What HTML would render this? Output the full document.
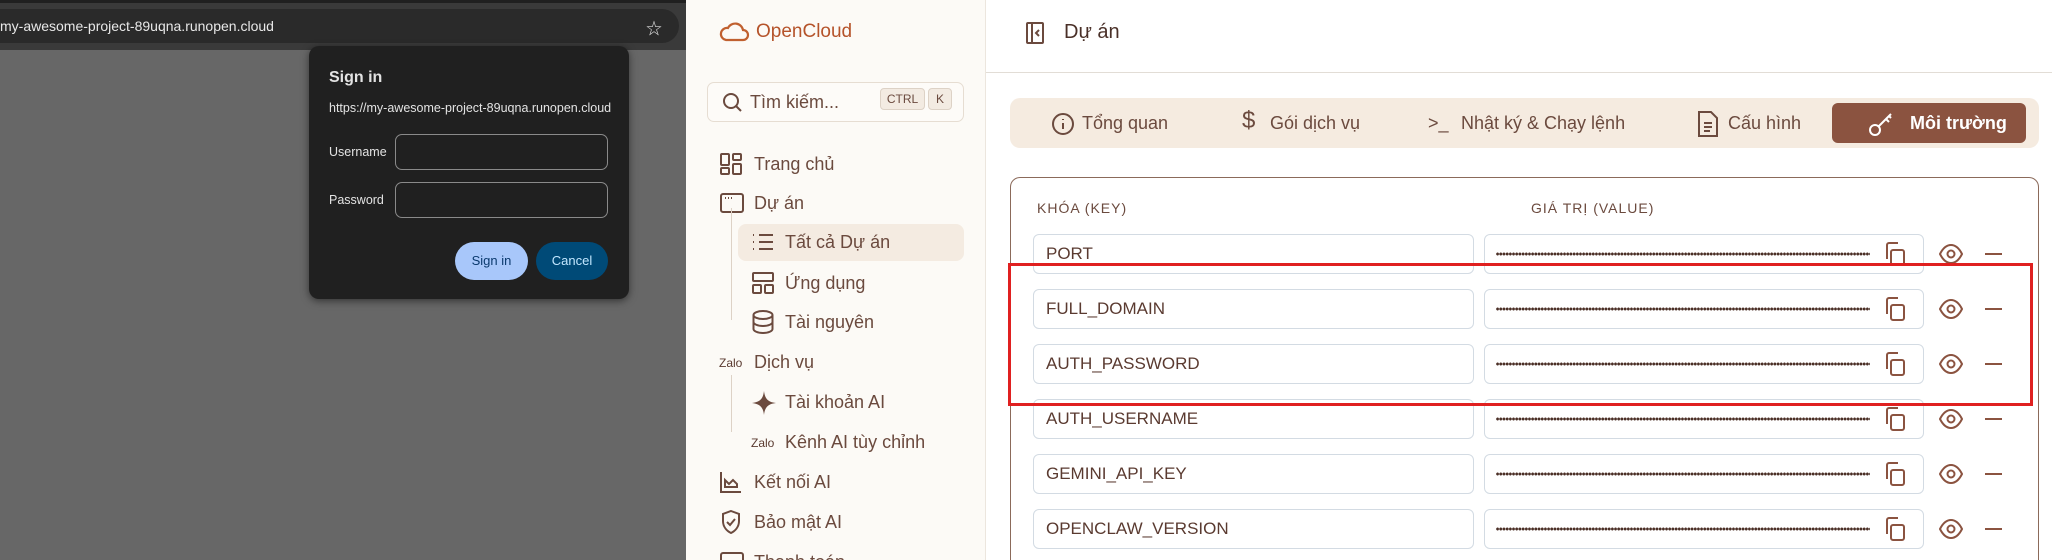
<!DOCTYPE html>
<html style="width:2052px;height:560px;overflow:hidden"><head><meta charset="utf-8"><style>
*{box-sizing:border-box;margin:0;padding:0}
body{width:2052px;height:560px;overflow:hidden;position:relative;font-family:"Liberation Sans","Noto Sans CJK SC",sans-serif;background:#fff}
.abs{position:absolute}
#browser{left:0;top:0;width:686px;height:560px;background:#676767}
#tb{left:0;top:0;width:686px;height:50px;background:#3a3a3a}
#tb0{left:0;top:0;width:686px;height:3px;background:#202020}
#addr{left:-20px;top:9px;width:699px;height:34px;background:#2a2a2a;border-radius:17px;color:#e8e8e8;font-size:14px;line-height:34px;padding-left:20px}
#dlg{left:309px;top:46px;width:320px;height:253px;background:#202020;border-radius:10px;box-shadow:0 2px 8px rgba(0,0,0,.5);color:#e3e3e3}
.inp{position:absolute;left:86px;width:213px;height:36px;border:1px solid #8a8a8a;border-radius:7px}
.btn{position:absolute;top:196px;height:38px;border-radius:19px;font-size:13px;line-height:38px;text-align:center}
#side{left:686px;top:0;width:300px;height:560px;background:#fcfaf6;border-right:1px solid #ece6de;overflow:hidden}
.nav{position:absolute;font-size:18px;color:#6b4a3e;line-height:24px}
#main{left:986px;top:0;width:1066px;height:560px;background:#fff}
.tab{position:absolute;top:111px;font-size:18px;color:#6b4a3e;line-height:24px}
.k{position:absolute;left:1033px;width:441px;height:40px;border:1px solid #d3dbe3;border-radius:6px;font-size:17px;color:#5a3a30;line-height:38px;padding-left:12px}
.v{position:absolute;left:1484px;width:440px;height:40px;border:1px solid #d3dbe3;border-radius:6px}
.dots{position:absolute;left:11px;top:17px;width:374px;height:4px;background-image:radial-gradient(circle,#4a2e25 1.3px,transparent 1.6px);background-size:3.2px 4px}
</style></head><body>
<div id="browser" class="abs"></div>
<div id="tb" class="abs"></div>
<div id="tb0" class="abs"></div>
<div id="addr" class="abs">my-awesome-project-89uqna.runopen.cloud</div>
<div class="abs" style="left:646px;top:15px;color:#ddd;font-size:16px">☆</div>
<div id="dlg" class="abs">
 <div class="abs" style="left:20px;top:23px;font-size:16px;font-weight:bold">Sign in</div>
 <div class="abs" style="left:20px;top:55px;font-size:12.5px">https://my-awesome-project-89uqna.runopen.cloud</div>
 <div class="abs" style="left:20px;top:99px;font-size:12.5px">Username</div>
 <div class="inp" style="top:88px"></div>
 <div class="abs" style="left:20px;top:147px;font-size:12.5px">Password</div>
 <div class="inp" style="top:136px"></div>
 <div class="btn" style="left:146px;width:73px;background:#a8c7fa;color:#0b3a6e">Sign in</div>
 <div class="btn" style="left:227px;width:72px;background:#004a77;color:#c2e7ff">Cancel</div>
</div>

<div id="side" class="abs">
 <svg class="abs" style="left:32px;top:20px" width="32" height="24" viewBox="0 0 32 24" fill="none" stroke="#c0602f" stroke-width="2.2"><path d="M8 20h17a5 5 0 0 0 0-10 8 8 0 0 0-15-2 6 6 0 0 0-2 12z"/></svg>
 <div class="abs" style="left:70px;top:21px;font-size:19px;color:#b5532a">OpenCloud</div>
 <div class="abs" style="left:21px;top:82px;width:257px;height:40px;border:1px solid #e6ddd2;border-radius:7px;background:#fdfbf8"></div>
 <svg class="abs" style="left:35px;top:91px" width="22" height="22" viewBox="0 0 22 22" fill="none" stroke="#6b4a3e" stroke-width="2"><circle cx="10" cy="10" r="7"/><path d="M15 15l5 5"/></svg>
 <div class="nav" style="left:64px;top:90px">Tìm kiếm...</div>
 <div class="abs" style="left:194px;top:88px;width:45px;height:22px;border:1px solid #ddd2c6;background:#f3ebe2;border-radius:4px;font-size:12px;color:#6b4a3e;text-align:center;line-height:20px">CTRL</div>
 <div class="abs" style="left:242px;top:88px;width:24px;height:22px;border:1px solid #ddd2c6;background:#f3ebe2;border-radius:4px;font-size:12px;color:#6b4a3e;text-align:center;line-height:20px">K</div>
 <svg class="abs" style="left:34px;top:153px" width="22" height="22" viewBox="0 0 22 22" fill="none" stroke="#6b4a3e" stroke-width="2"><rect x="1" y="1" width="8" height="11" rx="1"/><rect x="13" y="1" width="8" height="6" rx="1"/><rect x="13" y="11" width="8" height="10" rx="1"/><rect x="1" y="15" width="8" height="6" rx="1"/></svg>
 <div class="nav" style="left:68px;top:152px">Trang chủ</div>
 <svg class="abs" style="left:34px;top:193px" width="24" height="20" viewBox="0 0 24 20" fill="none" stroke="#6b4a3e" stroke-width="2"><rect x="1" y="1" width="22" height="18" rx="2"/><path d="M5 5h1M8 5h1M11 5h1"/></svg>
 <div class="nav" style="left:68px;top:191px">Dự án</div>
 <div class="abs" style="left:45px;top:208px;width:1px;height:112px;background:#ddd2c6"></div>
 <div class="abs" style="left:52px;top:224px;width:226px;height:37px;background:#f4ebe1;border-radius:8px"></div>
 <svg class="abs" style="left:66px;top:232px" width="22" height="20" viewBox="0 0 22 20" fill="none" stroke="#6b4a3e" stroke-width="2"><path d="M1 3h1M1 10h1M1 17h1M7 3h14M7 10h14M7 17h14"/></svg>
 <div class="nav" style="left:99px;top:230px">Tất cả Dự án</div>
 <svg class="abs" style="left:66px;top:272px" width="22" height="22" viewBox="0 0 22 22" fill="none" stroke="#6b4a3e" stroke-width="2"><rect x="1" y="1" width="20" height="8" rx="1"/><rect x="1" y="13" width="8" height="8" rx="1"/><rect x="13" y="13" width="8" height="8" rx="1"/></svg>
 <div class="nav" style="left:99px;top:271px">Ứng dụng</div>
 <svg class="abs" style="left:66px;top:310px" width="22" height="24" viewBox="0 0 22 24" fill="none" stroke="#6b4a3e" stroke-width="2"><ellipse cx="11" cy="5" rx="9.5" ry="4"/><path d="M1.5 5v14c0 2 4 4 9.5 4s9.5-2 9.5-4V5M1.5 12c0 2 4 4 9.5 4s9.5-2 9.5-4"/></svg>
 <div class="nav" style="left:99px;top:310px">Tài nguyên</div>
 <div class="abs" style="left:33px;top:356px;font-size:12px;color:#5a3a30">Zalo</div>
 <div class="nav" style="left:68px;top:350px">Dịch vụ</div>
 <div class="abs" style="left:45px;top:375px;width:1px;height:57px;background:#ddd2c6"></div>
 <svg class="abs" style="left:66px;top:391px" width="24" height="24" viewBox="0 0 24 24"><path d="M12 0C13 8 16 11 24 12 16 13 13 16 12 24 11 16 8 13 0 12 8 11 11 8 12 0z" fill="#6b4a3e"/></svg>
 <div class="nav" style="left:99px;top:390px">Tài khoản AI</div>
 <div class="abs" style="left:65px;top:436px;font-size:12px;color:#5a3a30">Zalo</div>
 <div class="nav" style="left:99px;top:430px">Kênh AI tùy chỉnh</div>
 <svg class="abs" style="left:34px;top:471px" width="22" height="22" viewBox="0 0 22 22" fill="none" stroke="#6b4a3e" stroke-width="2"><path d="M1 1v20h20M5 16v-7l4 4 4-4 4 4v3z"/></svg>
 <div class="nav" style="left:68px;top:470px">Kết nối AI</div>
 <svg class="abs" style="left:35px;top:510px" width="20" height="24" viewBox="0 0 20 24" fill="none" stroke="#6b4a3e" stroke-width="2"><path d="M10 1l8 3v7c0 6-4 10-8 12-4-2-8-6-8-12V4z"/><path d="M6 12l3 3 5-6"/></svg>
 <div class="nav" style="left:68px;top:510px">Bảo mật AI</div>
 <svg class="abs" style="left:34px;top:552px" width="24" height="8" viewBox="0 0 24 8" fill="none" stroke="#6b4a3e" stroke-width="2"><path d="M1 8V3a2 2 0 0 1 2-2h18a2 2 0 0 1 2 2v5"/></svg>
 <div class="abs" style="left:68px;top:550px;width:120px;height:10px;overflow:hidden"><div class="nav" style="left:0;top:0">Thanh toán</div></div>
</div>

<div id="main" class="abs" style="overflow:hidden">
<div class="abs" style="left:24px;top:177px;width:1029px;height:420px;border:1px solid #8b6a5a;border-radius:10px"></div>
</div>
<div class="abs" style="left:986px;top:72px;width:1066px;height:1px;background:#e2ddd6"></div>
<svg class="abs" style="left:1026px;top:22px" width="18" height="22" viewBox="0 0 18 22" fill="none" stroke="#6b4a3e" stroke-width="2"><rect x="1" y="1" width="16" height="20" rx="1"/><path d="M6 1v20M13 8l-3 3 3 3"/></svg>
<div class="abs" style="left:1064px;top:21px;font-size:20px;color:#4a3028">Dự án</div>

<div class="abs" style="left:1010px;top:98px;width:1029px;height:50px;background:#f5ebe0;border-radius:10px"></div>
<div class="abs" style="left:1832px;top:103px;width:194px;height:40px;background:#8b5340;border-radius:6px"></div>
<svg class="abs" style="left:1051px;top:112px" width="24" height="24" viewBox="0 0 24 24" fill="none" stroke="#6b4a3e" stroke-width="2"><circle cx="12" cy="12" r="10"/><path d="M12 11v6M12 7v1"/></svg>
<div class="tab" style="left:1082px">Tổng quan</div>
<div class="tab" style="left:1242px;font-size:24px;top:109px">$</div>
<div class="tab" style="left:1270px">Gói dịch vụ</div>
<div class="tab" style="left:1428px">&gt;_</div>
<div class="tab" style="left:1461px">Nhật ký &amp; Chạy lệnh</div>
<svg class="abs" style="left:1698px;top:111px" width="20" height="26" viewBox="0 0 20 26" fill="none" stroke="#6b4a3e" stroke-width="2"><path d="M1 1h12l6 6v18H1z"/><path d="M6 12h8M6 16h8M6 20h6"/></svg>
<div class="tab" style="left:1728px">Cấu hình</div>
<svg class="abs" style="left:1868px;top:111px" width="26" height="26" viewBox="0 0 26 26" fill="none" stroke="#fff" stroke-width="2"><circle cx="7" cy="19" r="5"/><path d="M11 15L23 3M18 8l3 3M21 5l2 2"/></svg>
<div class="tab" style="left:1910px;color:#fff;font-weight:bold">Môi trường</div>

<div class="abs" style="left:1037px;top:200px;font-size:14px;color:#6b4a3e;letter-spacing:1px">KHÓA (KEY)</div>
<div class="abs" style="left:1531px;top:200px;font-size:14px;color:#6b4a3e;letter-spacing:1px">GIÁ TRỊ (VALUE)</div>

<div id="rows"></div>
<script>
var keys=["PORT","FULL_DOMAIN","AUTH_PASSWORD","AUTH_USERNAME","GEMINI_API_KEY","OPENCLAW_VERSION"];
var h="";
keys.forEach(function(k,i){var t=234+i*55;
h+='<div class="k" style="top:'+t+'px">'+k+'</div>';
h+='<div class="v" style="top:'+t+'px"><div class="dots"></div></div>';
h+='<svg class="abs" style="left:1883px;top:'+(t+7)+'px" width="24" height="26" viewBox="0 0 24 26" fill="none" stroke="#8b5340" stroke-width="2"><rect x="8" y="9" width="13" height="15" rx="2"/><path d="M4 18V4a2 2 0 0 1 2-2h9"/></svg>';
h+='<svg class="abs" style="left:1939px;top:'+(t+9)+'px" width="24" height="22" viewBox="0 0 24 22" fill="none" stroke="#8b5340" stroke-width="2"><path d="M1 11C4 5 8 2 12 2s8 3 11 9c-3 6-7 9-11 9S4 17 1 11z"/><circle cx="12" cy="11" r="3.5"/></svg>';
h+='<div class="abs" style="left:1985px;top:'+(t+19)+'px;width:17px;height:2px;background:#8b5340"></div>';
});
document.getElementById("rows").innerHTML=h;
</script>
<div class="abs" style="left:1008px;top:263px;width:1025px;height:143px;border:3px solid #e02020"></div>
</body></html>
